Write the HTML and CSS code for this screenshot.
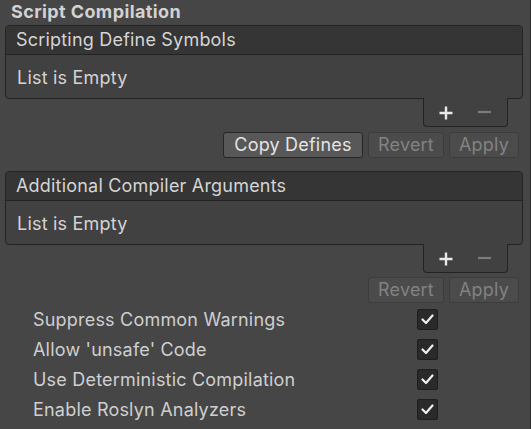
FILE: index.html
```html
<!DOCTYPE html>
<html>
<head>
<meta charset="utf-8">
<link rel="stylesheet" href="styles.css">
</head>
<body>
<div class="panel">
  <div class="title">Script Compilation</div>

  <div class="list">
    <div class="list-head">Scripting Define Symbols</div>
    <div class="list-body">List is Empty</div>
  </div>
  <div class="footer-row">
    <div class="footer">
      <svg class="plus" viewBox="0 0 16 16" width="16" height="16"><path d="M8 1.5v13M1.5 8h13" stroke="#e8e8e8" stroke-width="2.4" fill="none"/></svg>
      <svg class="minus" viewBox="0 0 13 4" width="13" height="4"><path d="M0 2h13" stroke="#7c7c7c" stroke-width="2.2" fill="none"/></svg>
    </div>
  </div>
  <div class="btn-row first">
    <div class="btn active">Copy Defines</div>
    <div class="btn disabled revert">Revert</div>
    <div class="btn disabled apply">Apply</div>
  </div>

  <div class="list second">
    <div class="list-head">Additional Compiler Arguments</div>
    <div class="list-body">List is Empty</div>
  </div>
  <div class="footer-row">
    <div class="footer">
      <svg class="plus" viewBox="0 0 16 16" width="16" height="16"><path d="M8 1.5v13M1.5 8h13" stroke="#e8e8e8" stroke-width="2.4" fill="none"/></svg>
      <svg class="minus" viewBox="0 0 13 4" width="13" height="4"><path d="M0 2h13" stroke="#7c7c7c" stroke-width="2.2" fill="none"/></svg>
    </div>
  </div>
  <div class="btn-row">
    <div class="btn disabled revert">Revert</div>
    <div class="btn disabled apply">Apply</div>
  </div>

  <div class="options">
    <div class="opt"><span class="label">Suppress Common Warnings</span><span class="check"><svg viewBox="0 0 21 21" width="21" height="21"><polyline points="5.5,10.5 9,14 15.5,6.5" fill="none" stroke="#f0f0f0" stroke-width="2.2" stroke-linecap="round" stroke-linejoin="round"/></svg></span></div>
    <div class="opt"><span class="label">Allow 'unsafe' Code</span><span class="check"><svg viewBox="0 0 21 21" width="21" height="21"><polyline points="5.5,10.5 9,14 15.5,6.5" fill="none" stroke="#f0f0f0" stroke-width="2.2" stroke-linecap="round" stroke-linejoin="round"/></svg></span></div>
    <div class="opt"><span class="label">Use Deterministic Compilation</span><span class="check"><svg viewBox="0 0 21 21" width="21" height="21"><polyline points="5.5,10.5 9,14 15.5,6.5" fill="none" stroke="#f0f0f0" stroke-width="2.2" stroke-linecap="round" stroke-linejoin="round"/></svg></span></div>
    <div class="opt"><span class="label">Enable Roslyn Analyzers</span><span class="check"><svg viewBox="0 0 21 21" width="21" height="21"><polyline points="5.5,10.5 9,14 15.5,6.5" fill="none" stroke="#f0f0f0" stroke-width="2.2" stroke-linecap="round" stroke-linejoin="round"/></svg></span></div>
  </div>
</div>
</body>
</html>
```

FILE: styles.css
```css
html, body {
  margin: 0;
  padding: 0;
  background: #464646;
}
body {
  font-family: Inter, "Noto Sans", sans-serif;
  color: #d4d4d4;
  font-size: 18px;
  letter-spacing: 0.2px;
  width: 531px;
  height: 429px;
  overflow: hidden;
}
.panel {
  width: 530px;
  height: 429px;
  border-right: 1px solid #2c2c2c;
}
.title {
  height: 25px;
  line-height: 23px;
  padding-left: 11px;
  font-weight: 700;
  letter-spacing: 0.4px;
  color: #d2d2d2;
}
.list {
  margin-left: 5px;
  width: 516px;
  border: 1px solid #232323;
  border-radius: 4px;
  background: #414141;
  overflow: hidden;
}
.list.second {
  margin-top: 13px;
}
.list-head {
  height: 28px;
  line-height: 28px;
  background: #353535;
  border-bottom: 1px solid #232323;
  padding-left: 10px;
}
.list-body {
  height: 43px;
  line-height: 45px;
  padding-left: 11px;
}
.footer-row {
  display: flex;
  justify-content: flex-end;
  padding-right: 22px;
  margin-top: -1px;
}
.footer {
  position: relative;
  width: 69px;
  height: 28px;
  background: #414141;
  border: 1px solid #232323;
  border-top: none;
  border-radius: 0 0 4px 4px;
  display: flex;
  align-items: center;
  padding-left: 14px;
  box-sizing: content-box;
}
.plus {
  display: block;
  margin-top: 1px;
}
.minus {
  display: block;
  margin-left: 24px;
  margin-top: 0;
}
.btn-row {
  display: flex;
  justify-content: flex-end;
  gap: 5px;
  padding-right: 11px;
  margin-top: 4px;
}
.btn-row.first {
  margin-top: 5px;
}
.btn {
  height: 24px;
  line-height: 24px;
  border: 1px solid #303030;
  border-radius: 3px;
  text-align: center;
  box-sizing: content-box;
}
.btn.active {
  width: 138px;
  background: #585858;
  color: #e4e4e4;
  border-color: #262626;
}
.btn.disabled {
  background: #4b4b4b;
  color: #828282;
  border-color: #3c3c3c;
}
.btn.revert { width: 74px; }
.btn.apply { width: 68px; }
.options {
  margin-top: 1px;
  padding-left: 33px;
}
.opt {
  display: flex;
  align-items: center;
  height: 30px;
}
.label {
  width: 384px;
  color: #cfcfcf;
}
.check {
  width: 21px;
  height: 21px;
  border-radius: 3px;
  background: #2a2a2a;
  box-shadow: inset 0 0 0 1px #1e1e1e;
  display: flex;
}
```
